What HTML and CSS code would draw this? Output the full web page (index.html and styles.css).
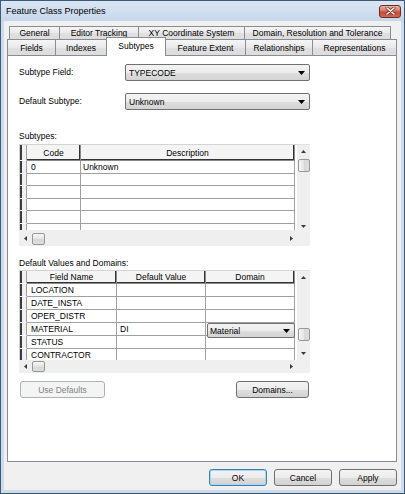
FILE: index.html
```html
<!DOCTYPE html>
<html>
<head>
<meta charset="utf-8">
<title>Feature Class Properties</title>
<link rel="stylesheet" href="styles.css">
</head>
<body>
<div class="window">
  <div class="titlebar">
    <span class="title">Feature Class Properties</span>
    <span class="close"><svg width="11" height="8" viewBox="0 0 11 8"><path d="M2 1L9 7M9 1L2 7" stroke="#7a2e25" stroke-width="3" stroke-linecap="round"/><path d="M2 1L9 7M9 1L2 7" stroke="#fff" stroke-width="1.6" stroke-linecap="round"/></svg></span>
  </div>
  <div class="client">
    <div class="tabrow row1">
      <div class="tab w-general">General</div>
      <div class="tab w-editor">Editor Tracking</div>
      <div class="tab w-xy">XY Coordinate System</div>
      <div class="tab w-domain last">Domain, Resolution and Tolerance</div>
    </div>
    <div class="tabrow row2">
      <div class="tab w-fields">Fields</div>
      <div class="tab w-indexes">Indexes</div>
      <div class="tab w-subtypes selected">Subtypes</div>
      <div class="tab w-extent">Feature Extent</div>
      <div class="tab w-rel">Relationships</div>
      <div class="tab w-rep last">Representations</div>
    </div>
    <div class="panel">
      <div class="field-row">
        <span class="label">Subtype Field:</span>
        <div class="combo"><span>TYPECODE</span><svg width="7" height="4" viewBox="0 0 7 4"><path d="M0 0H7L3.5 4Z" fill="#000"/></svg></div>
      </div>
      <div class="field-row">
        <span class="label">Default Subtype:</span>
        <div class="combo"><span>Unknown</span><svg width="7" height="4" viewBox="0 0 7 4"><path d="M0 0H7L3.5 4Z" fill="#000"/></svg></div>
      </div>

      <div class="section-label first">Subtypes:</div>
      <div class="grid grid1">
        <div class="data">
          <div class="gr head"><div class="sel"></div><div class="c code">Code</div><div class="c desc">Description</div></div>
          <div class="gr"><div class="sel"></div><div class="c code">0</div><div class="c desc">Unknown</div></div>
          <div class="gr"><div class="sel"></div><div class="c code"></div><div class="c desc"></div></div>
          <div class="gr"><div class="sel"></div><div class="c code"></div><div class="c desc"></div></div>
          <div class="gr"><div class="sel"></div><div class="c code"></div><div class="c desc"></div></div>
          <div class="gr"><div class="sel"></div><div class="c code"></div><div class="c desc"></div></div>
          <div class="gr"><div class="sel"></div><div class="c code"></div><div class="c desc"></div></div>
        </div>
        <div class="vscroll">
          <div class="arrow up"><svg width="5" height="3" viewBox="0 0 5 3"><path d="M2.5 0L5 3H0Z" fill="#3a3a3a"/></svg></div>
          <div class="track"><div class="thumb-v"></div></div>
          <div class="arrow down"><svg width="5" height="3" viewBox="0 0 5 3"><path d="M0 0H5L2.5 3Z" fill="#3a3a3a"/></svg></div>
        </div>
        <div class="hscroll">
          <div class="arrow-h"><svg width="3" height="5" viewBox="0 0 3 5"><path d="M0 2.5L3 0V5Z" fill="#3a3a3a"/></svg></div>
          <div class="thumb-h"></div>
          <div class="spacer"></div>
          <div class="arrow-h"><svg width="3" height="5" viewBox="0 0 3 5"><path d="M3 2.5L0 0V5Z" fill="#3a3a3a"/></svg></div>
        </div>
        <div class="corner"></div>
      </div>

      <div class="section-label second">Default Values and Domains:</div>
      <div class="grid grid2">
        <div class="data">
          <div class="gr head"><div class="sel"></div><div class="c fname">Field Name</div><div class="c fdef">Default Value</div><div class="c fdom">Domain</div></div>
          <div class="gr"><div class="sel"></div><div class="c fname">LOCATION</div><div class="c fdef"></div><div class="c fdom"></div></div>
          <div class="gr"><div class="sel"></div><div class="c fname">DATE_INSTA</div><div class="c fdef"></div><div class="c fdom"></div></div>
          <div class="gr"><div class="sel"></div><div class="c fname">OPER_DISTR</div><div class="c fdef"></div><div class="c fdom"></div></div>
          <div class="gr"><div class="sel"></div><div class="c fname">MATERIAL</div><div class="c fdef">DI</div><div class="c fdom editing"><div class="cell-combo"><span>Material</span><svg width="7" height="4" viewBox="0 0 7 4"><path d="M0 0H7L3.5 4Z" fill="#000"/></svg></div></div></div>
          <div class="gr"><div class="sel"></div><div class="c fname">STATUS</div><div class="c fdef"></div><div class="c fdom"></div></div>
          <div class="gr"><div class="sel"></div><div class="c fname">CONTRACTOR</div><div class="c fdef"></div><div class="c fdom"></div></div>
        </div>
        <div class="vscroll">
          <div class="arrow up"><svg width="5" height="3" viewBox="0 0 5 3"><path d="M2.5 0L5 3H0Z" fill="#3a3a3a"/></svg></div>
          <div class="track"><div class="thumb-v mid"></div></div>
          <div class="arrow down"><svg width="5" height="3" viewBox="0 0 5 3"><path d="M0 0H5L2.5 3Z" fill="#3a3a3a"/></svg></div>
        </div>
        <div class="hscroll">
          <div class="arrow-h"><svg width="3" height="5" viewBox="0 0 3 5"><path d="M0 2.5L3 0V5Z" fill="#3a3a3a"/></svg></div>
          <div class="thumb-h"></div>
          <div class="spacer"></div>
          <div class="arrow-h"><svg width="3" height="5" viewBox="0 0 3 5"><path d="M3 2.5L0 0V5Z" fill="#3a3a3a"/></svg></div>
        </div>
        <div class="corner"></div>
      </div>

      <div class="panel-buttons">
        <div class="btn disabled use-defaults">Use Defaults</div>
        <div class="btn domains">Domains...</div>
      </div>
    </div>
    <div class="dialog-buttons">
      <div class="btn dlg default">OK</div>
      <div class="btn dlg">Cancel</div>
      <div class="btn dlg">Apply</div>
    </div>
  </div>
</div>
</body>
</html>
```
FILE: styles.css
```css
* { box-sizing: border-box; }
html, body { margin: 0; padding: 0; }
body {
  width: 405px;
  height: 494px;
  overflow: hidden;
  font-family: "Liberation Sans", Arial, sans-serif;
  font-size: 8.5px;
  color: #000;
  background: #fff;
}
.window {
  width: 405px;
  height: 494px;
  border: 1px solid #3f5a73;
  border-bottom-color: #2b5766;
  background: linear-gradient(#dae6f4, #c6d7ea 20px, #cddbec 21px, #cddbec);
  display: flex;
  flex-direction: column;
}
.titlebar {
  height: 20px;
  flex: none;
  display: flex;
  align-items: center;
  justify-content: space-between;
  padding: 0 3px 0 5px;
}
.title { font-size: 9px; color: #000; }
.close {
  width: 22px;
  height: 13px;
  border: 1px solid #6e2c24;
  border-radius: 3px;
  background: linear-gradient(#eab1a7, #d77565 45%, #c44a36 55%, #d06a53);
  display: flex;
  align-items: center;
  justify-content: center;
}
.client {
  flex: 1;
  margin: 0 3px 3px 3px;
  background: #f0f0f0;
  padding: 5px 4px 0 3px;
}

/* tabs */
.tabrow { display: flex; }
.row1 { height: 13px; padding-left: 2px; }
.row2 { height: 16px; align-items: flex-end; }
.tab {
  height: 100%;
  flex: none;
  border: 1px solid #898c95;
  border-bottom: none;
  border-right: none;
  background: linear-gradient(#f5f5f5, #e9e9e9 50%, #e0e0e0 51%, #dcdcdc);
  display: flex;
  align-items: center;
  justify-content: center;
  white-space: nowrap;
  line-height: 10px;
}
.row2 .tab { padding-top: 1px; }
.tab.last { border-right: 1px solid #898c95; }
.tab.selected {
  height: 19px;
  margin-bottom: -1px;
  margin-right: -1px;
  background: #fff;
  border-right: 1px solid #898c95;
  position: relative;
  z-index: 1;
  padding: 0 0 3px 0;
}
.w-general { width: 50px; }
.w-editor { width: 79px; }
.w-xy { width: 106px; }
.w-domain { width: 147px; }
.w-fields { width: 48px; }
.w-indexes { width: 51px; }
.w-subtypes { width: 60px; }
.w-extent { width: 80px; }
.w-rel { width: 67px; }
.w-rep { width: 85px; }

/* panel */
.panel {
  height: 407px;
  background: #fff;
  border: 1px solid #898c95;
  padding: 8px 0 0 11px;
}
.field-row { display: flex; align-items: center; height: 17px; }
.field-row + .field-row { margin-top: 12px; }
.field-row .label { width: 106px; flex: none; padding-bottom: 1px; }
.combo, .cell-combo {
  display: flex;
  align-items: center;
  justify-content: space-between;
  border: 1px solid #707070;
  border-radius: 2px;
  background: linear-gradient(#f3f3f3, #ececec 50%, #dedede 51%, #d3d3d3);
}
.combo { width: 185px; height: 17px; padding: 0 4px 0 3px; }

.section-label { line-height: 11px; }
.section-label.first { margin-top: 21px; margin-bottom: 2px; }
.section-label.second { margin-top: 12px; margin-bottom: 1px; }

/* grids */
.grid {
  width: 291px;
  display: grid;
  grid-template-columns: 278px 13px;
  background: #f0f0f0;
}
.grid1 { grid-template-rows: 86px 16px; }
.grid2 { grid-template-rows: 90px 13px; }
.data {
  background: #fff;
  overflow: hidden;
  border-top: 1px solid #d4d4d4;
  border-left: 1px solid #d4d4d4;
}
.gr { display: flex; height: 12.6px; }
.grid2 .gr { height: 13px; }
.grid1 .gr.head { height: 16px; }
.grid2 .gr.head { height: 13px; }
.sel {
  width: 7px;
  flex: none;
  background: #f0f0f0;
  box-shadow: inset 2px 0 #3a3a3a;
  border-right: 1px solid #a0a0a0;
  border-bottom: 1px solid #fff;
}
.c {
  flex: none;
  border-right: 1px solid #a0a0a0;
  border-bottom: 1px solid #a0a0a0;
  display: flex;
  align-items: center;
  white-space: nowrap;
  overflow: hidden;
  padding-left: 3px;
}
.head .c {
  background: #f4f4f4;
  justify-content: center;
  padding: 0;
  border-right-color: #8a8a8a;
  border-bottom-color: #8a8a8a;
  box-shadow: inset -1px -1px #333;
}
.code { width: 54px; padding-left: 4px; }
.desc { width: 214px; padding-left: 2px; }
.fname { width: 90px; padding-left: 4px; }
.fdef { width: 89px; padding-left: 3px; }
.fdom { width: 89px; }
.c.editing { position: relative; overflow: visible; }
.cell-combo {
  position: absolute;
  left: 1px;
  top: 0;
  width: 88px;
  height: 15px;
  padding: 0 4px 0 2px;
  z-index: 2;
}

.vscroll {
  display: flex;
  flex-direction: column;
  background: #efefef;
  border-top: 1px solid #e2e2e2;
}
.arrow {
  height: 13px;
  flex: none;
  display: flex;
  align-items: center;
  justify-content: center;
}
.grid1 .arrow.down { align-items: flex-end; padding-bottom: 2px; }
.track {
  flex: 1;
  display: flex;
  flex-direction: column;
  align-items: center;
}
.thumb-v {
  width: 12px;
  height: 13px;
  margin-top: 1px;
  border: 1px solid #979797;
  border-radius: 2px;
  background: linear-gradient(90deg, #f7f7f7, #e4e4e4 50%, #d8d8d8 51%, #dedede);
}
.thumb-v.mid { margin-top: 44px; }
.hscroll {
  display: flex;
  align-items: center;
  background: #efefef;
}
.arrow-h {
  width: 12px;
  height: 100%;
  flex: none;
  display: flex;
  align-items: center;
  justify-content: center;
}
.thumb-h {
  width: 13px;
  height: 12px;
  margin-left: 1px;
  border: 1px solid #979797;
  border-radius: 2px;
  background: linear-gradient(#f7f7f7, #e4e4e4 50%, #d8d8d8 51%, #dedede);
}
.grid1 .thumb-h { margin-top: 2px; }
.grid2 .thumb-h { height: 11px; }
.spacer { flex: 1; }
.corner { background: #f0f0f0; }

/* buttons */
.btn {
  height: 17px;
  border: 1px solid #707070;
  border-radius: 3px;
  background: linear-gradient(#f3f3f3, #ececec 50%, #dedede 51%, #d2d2d2);
  display: flex;
  align-items: center;
  justify-content: center;
  white-space: nowrap;
}
.btn.disabled {
  border-color: #adb2b5;
  background: #f4f4f4;
  color: #838383;
}
.panel-buttons {
  display: flex;
  justify-content: space-between;
  width: 290px;
  margin-top: 8px;
  padding-left: 1px;
}
.use-defaults { width: 85px; }
.domains { width: 73px; }
.dialog-buttons {
  display: flex;
  justify-content: flex-end;
  gap: 7px;
  margin-top: 7px;
}
.btn.dlg { width: 58px; }
.btn.default {
  border-color: #3c7fb1;
  box-shadow: inset 0 0 0 1px #a3d7f3;
}
```
